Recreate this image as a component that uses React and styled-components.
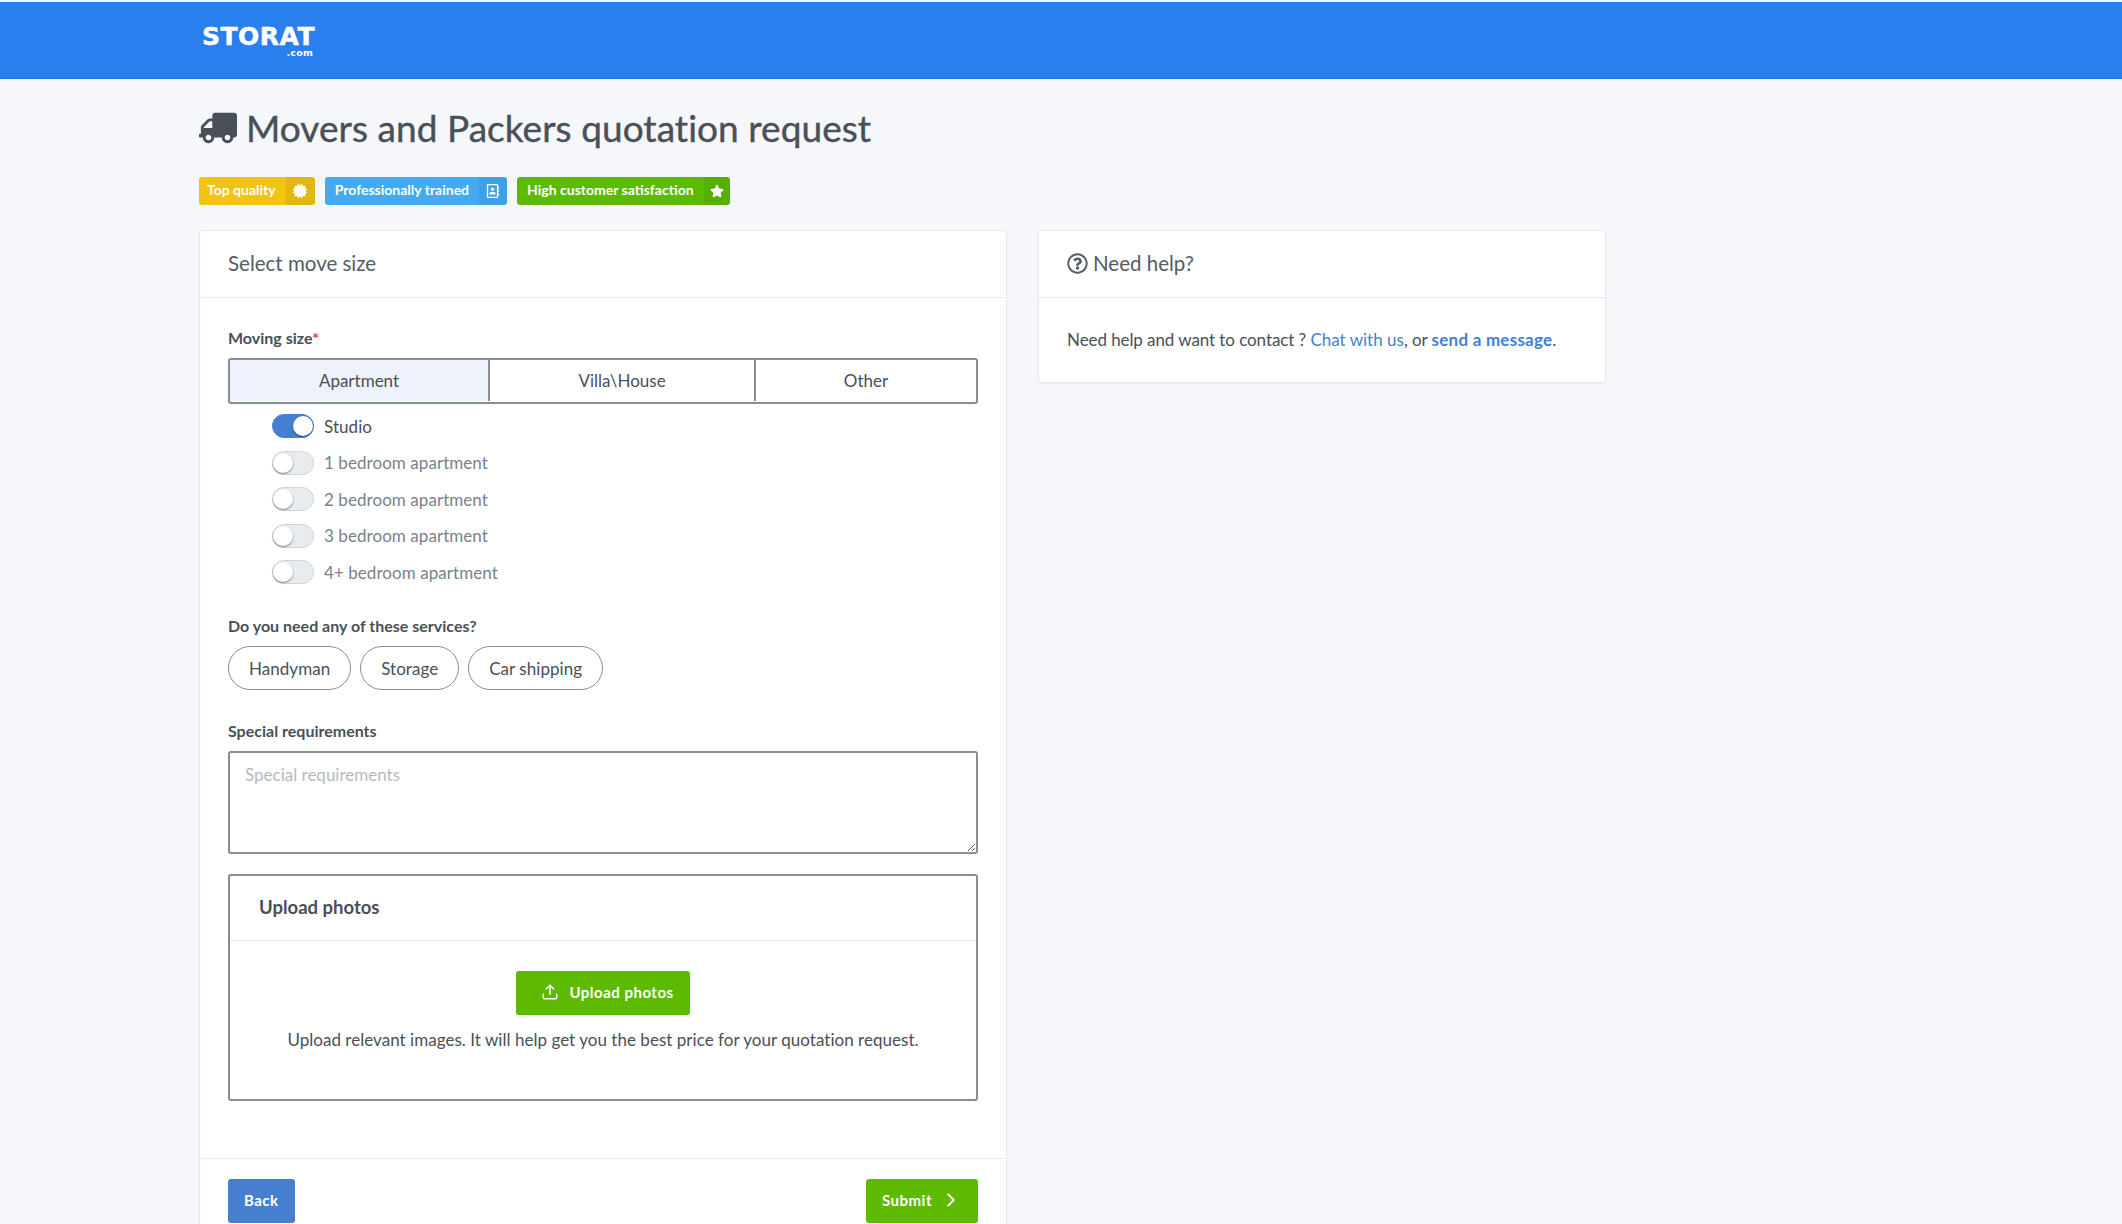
import React, { useState } from 'react';
import styled, { createGlobalStyle } from 'styled-components';
import { FaTruck, FaCertificate, FaRegAddressBook, FaStar, FaRegQuestionCircle } from 'react-icons/fa';
import { Upload, ChevronRight } from 'lucide-react';

const GlobalStyle = createGlobalStyle`
  html, body {
    margin: 0;
    height: 1224px;
    overflow: hidden;
    background: #f5f7fb;
  }
  body {
    font-family: Lato, "Noto Sans", sans-serif;
    font-size: 17px;
    color: #495057;
  }
  * { box-sizing: border-box; }
`;

const Page = styled.div`
  height: 1224px;
  overflow: hidden;
  padding-top: 2px;
  background: #f5f7fb;
`;

const TopBar = styled.header`
  height: 77px;
  background: #2a7fef;
  border-bottom: 1px solid #1f74e6;
  padding: 22px 0 0 202px;
`;

const Logo = styled.div`
  display: inline-flex;
  flex-direction: column;
  align-items: flex-end;
  color: #fff;
  font-family: "DejaVu Sans", sans-serif;
  font-weight: 700;
  font-size: 25px;
  line-height: 25px;
  letter-spacing: 0.5px;
  -webkit-text-stroke: 0.5px #fff;
`;

const LogoSub = styled.span`
  font-size: 9.5px;
  line-height: 8px;
  letter-spacing: 0.2px;
  margin-right: 2px;
  -webkit-text-stroke: 0;
`;

const Main = styled.main`
  width: 1407px;
  margin-left: 199px;
`;

const Title = styled.h1`
  display: flex;
  align-items: center;
  gap: 9px;
  margin: 0;
  padding-top: 14px;
  height: 83px;
  font-size: 37px;
  line-height: 44px;
  font-weight: 400;
  letter-spacing: 0.05px;
  color: #495057;
  -webkit-text-stroke: 0.4px #495057;

  svg {
    width: 38px;
    height: 38px;
    transform: scaleX(-1);
    color: #495057;
  }
`;

const TagRow = styled.div`
  display: flex;
  gap: 10px;
  margin-top: 15px;
`;

const Tag = styled.span`
  display: inline-flex;
  align-items: stretch;
  height: 28px;
  border-radius: 3px;
  overflow: hidden;
  background: ${(p) => p.$bg};
  color: #fff;
  font-size: 14px;
  font-weight: 700;
  line-height: 26px;
`;

const TagText = styled.span`
  padding: 0 10px 0 ${(p) => p.$left || 10}px;
`;

const TagIcon = styled.span`
  display: flex;
  align-items: center;
  justify-content: center;
  width: ${(p) => p.$w || 28}px;
  background: rgba(0, 0, 0, 0.06);

  svg {
    width: 14px;
    height: 14px;
  }
`;

const Columns = styled.div`
  display: grid;
  grid-template-columns: 808px 568px;
  gap: 31px;
  align-items: start;
  margin-top: 25px;
`;

const Card = styled.section`
  background: #fff;
  border: 1px solid #e4e9f1;
  border-radius: 3px;
  box-shadow: 0 1px 2px rgba(0, 30, 80, 0.05);
`;

const CardHeader = styled.div`
  display: flex;
  align-items: center;
  gap: 5px;
  height: 67px;
  padding: 0 28px 2px;
  border-bottom: 1px solid #e4e9f1;
  font-size: 20.5px;
  color: #555c64;

  svg {
    width: 21px;
    height: 21px;
  }
`;

const CardBody = styled.div`
  padding: 29px 28px 57px;
`;

const FieldLabel = styled.div`
  font-size: 16px;
  font-weight: 700;
  line-height: 22px;
  color: #495057;
`;

const Required = styled.span`
  color: #e03131;
`;

const Segments = styled.div`
  display: grid;
  grid-template-columns: 258px 266px 1fr;
  height: 46px;
  margin-top: 9px;
  padding-bottom: 1px;
  border: 2px solid #868e96;
  border-radius: 3px;
  overflow: hidden;
`;

const Segment = styled.div`
  display: flex;
  align-items: center;
  justify-content: center;
  background: ${(p) => (p.$active ? '#edf2fb' : '#fff')};
  border-left: ${(p) => (p.$first ? 'none' : '2px solid #868e96')};
  font-size: 17px;
  color: #495057;
`;

const SizeList = styled.div`
  display: flex;
  flex-direction: column;
  gap: 12.5px;
  margin: 10px 0 0 44px;
`;

const SizeRow = styled.label`
  display: flex;
  align-items: center;
  gap: 10px;
  height: 24px;
  font-size: 17px;
  letter-spacing: 0.06px;
  color: ${(p) => (p.$on ? '#495057' : '#7a828b')};
`;

const Track = styled.span`
  position: relative;
  width: 42px;
  height: 24px;
  border-radius: 12px;
  background: ${(p) => (p.$on ? '#467fcf' : '#e9ecef')};
  border: 1px solid ${(p) => (p.$on ? '#467fcf' : '#ced4dc')};
`;

const Knob = styled.span`
  position: absolute;
  top: 1px;
  left: ${(p) => (p.$on ? '20px' : '0')};
  width: 20px;
  height: 20px;
  border-radius: 50%;
  background: #fff;
  box-shadow: 0 1px 2px rgba(0, 0, 0, 0.45);
`;

const ServicesBlock = styled.div`
  margin-top: 31px;
`;

const Pills = styled.div`
  display: flex;
  gap: 9px;
  margin-top: 9px;
`;

const Pill = styled.div`
  display: flex;
  align-items: center;
  height: 44px;
  padding: 0 20px;
  border: 1px solid #868e96;
  border-radius: 22px;
  font-size: 17px;
  letter-spacing: 0.04px;
  color: #495057;
`;

const RequirementsBlock = styled.div`
  margin-top: 29.5px;
`;

const Requirements = styled.textarea`
  display: block;
  width: 100%;
  height: 103px;
  margin-top: 9px;
  padding: 11px 15px;
  border: 2px solid #868e96;
  border-radius: 3px;
  outline: none;
  resize: vertical;
  font-family: inherit;
  font-size: 17px;
  color: #495057;

  &::placeholder {
    color: #b4bac2;
  }
`;

const UploadBox = styled.div`
  height: 227px;
  margin-top: 20px;
  border: 2px solid #868e96;
  border-radius: 3px;
`;

const UploadHead = styled.div`
  display: flex;
  align-items: center;
  height: 65px;
  padding: 0 0 1px 29px;
  border-bottom: 1px solid #e4e9f1;
  font-size: 18.5px;
  font-weight: 700;
  color: #495057;
`;

const UploadBody = styled.div`
  display: flex;
  flex-direction: column;
  align-items: center;
  padding-top: 30px;
`;

const Button = styled.button`
  display: inline-flex;
  align-items: center;
  gap: ${(p) => p.$gap || 0}px;
  height: ${(p) => p.$h || 44}px;
  padding: ${(p) => p.$pad || '0 16px 2px'};
  border: none;
  border-radius: 3px;
  background: ${(p) => p.$bg || '#5eba00'};
  color: #fff;
  font-family: inherit;
  font-size: 15px;
  font-weight: 700;
  letter-spacing: 0.5px;
`;

const UploadNote = styled.p`
  margin: 13px 0 0;
  font-size: 17px;
  letter-spacing: 0.03px;
  line-height: 24px;
  color: #495057;
`;

const CardFooter = styled.div`
  display: flex;
  justify-content: space-between;
  padding: 20px 28px;
  border-top: 1px solid #e4e9f1;
`;

const HelpText = styled.p`
  margin: 0;
  padding: 29px 28px 29px;
  font-size: 17px;
  letter-spacing: -0.08px;
  line-height: 26px;
  color: #495057;
`;

const HelpLink = styled.a`
  color: #467fcf;
  font-weight: ${(p) => (p.$bold ? 700 : 400)};
  letter-spacing: ${(p) => (p.$bold ? '0.24px' : '0')};
`;

const sizes = ['Studio', '1 bedroom apartment', '2 bedroom apartment', '3 bedroom apartment', '4+ bedroom apartment'];

export default function App() {
  const [size] = useState('Studio');

  return (
    <Page>
      <GlobalStyle />
      <TopBar>
        <Logo>
          STORAT
          <LogoSub>.com</LogoSub>
        </Logo>
      </TopBar>
      <Main>
        <Title>
          <FaTruck />
          Movers and Packers quotation request
        </Title>
        <TagRow>
          <Tag $bg="#f1c40f">
            <TagText $left={8}>Top quality</TagText>
            <TagIcon $w={29}><FaCertificate /></TagIcon>
          </Tag>
          <Tag $bg="#45aaf2">
            <TagText>Professionally trained</TagText>
            <TagIcon><FaRegAddressBook /></TagIcon>
          </Tag>
          <Tag $bg="#5eba00">
            <TagText>High customer satisfaction</TagText>
            <TagIcon $w={26}><FaStar /></TagIcon>
          </Tag>
        </TagRow>
        <Columns>
          <Card>
            <CardHeader>Select move size</CardHeader>
            <CardBody>
              <FieldLabel>Moving size<Required>*</Required></FieldLabel>
              <Segments>
                <Segment $active $first>Apartment</Segment>
                <Segment>Villa\House</Segment>
                <Segment>Other</Segment>
              </Segments>
              <SizeList>
                {sizes.map((s) => (
                  <SizeRow key={s} $on={s === size}>
                    <Track $on={s === size}><Knob $on={s === size} /></Track>
                    {s}
                  </SizeRow>
                ))}
              </SizeList>
              <ServicesBlock>
                <FieldLabel>Do you need any of these services?</FieldLabel>
                <Pills>
                  <Pill>Handyman</Pill>
                  <Pill>Storage</Pill>
                  <Pill>Car shipping</Pill>
                </Pills>
              </ServicesBlock>
              <RequirementsBlock>
                <FieldLabel>Special requirements</FieldLabel>
                <Requirements placeholder="Special requirements" readOnly />
              </RequirementsBlock>
              <UploadBox>
                <UploadHead>Upload photos</UploadHead>
                <UploadBody>
                  <Button $gap={10} $pad="0 16px 2px 25px">
                    <Upload size={18} />
                    Upload photos
                  </Button>
                  <UploadNote>Upload relevant images. It will help get you the best price for your quotation request.</UploadNote>
                </UploadBody>
              </UploadBox>
            </CardBody>
            <CardFooter>
              <Button $bg="#467fcf">Back</Button>
              <Button $gap={8}>
                Submit
                <ChevronRight size={22} />
              </Button>
            </CardFooter>
          </Card>
          <Card>
            <CardHeader>
              <FaRegQuestionCircle />
              Need help?
            </CardHeader>
            <HelpText>
              Need help and want to contact ? <HelpLink>Chat with us</HelpLink>, or <HelpLink $bold>send a message</HelpLink>.
            </HelpText>
          </Card>
        </Columns>
      </Main>
    </Page>
  );
}
